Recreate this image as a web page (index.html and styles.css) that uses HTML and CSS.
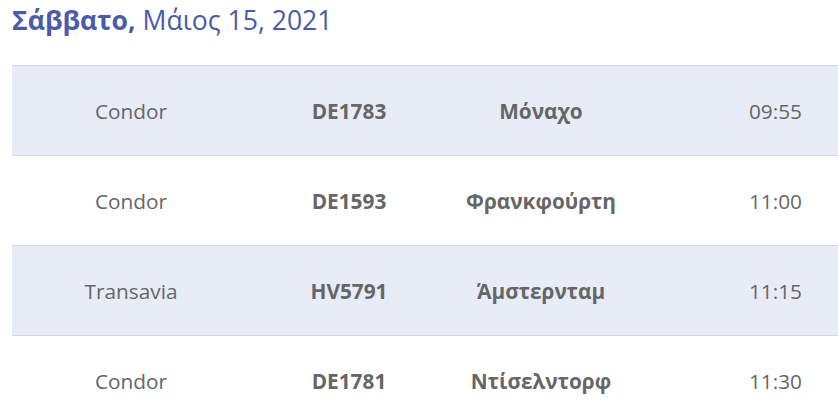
FILE: index.html
```html
<!DOCTYPE html>
<html lang="el">
<head>
<meta charset="utf-8">
<link rel="stylesheet" href="styles.css">
</head>
<body>
<h2 class="date"><strong>Σάββατο,</strong> Μάιος 15, 2021</h2>
<div class="flights">
  <div class="row alt"><span class="airline">Condor</span><span class="code">DE1783</span><span class="dest">Μόναχο</span><span class="time">09:55</span></div>
  <div class="row"><span class="airline">Condor</span><span class="code">DE1593</span><span class="dest">Φρανκφούρτη</span><span class="time">11:00</span></div>
  <div class="row alt"><span class="airline">Transavia</span><span class="code">HV5791</span><span class="dest">Άμστερνταμ</span><span class="time">11:15</span></div>
  <div class="row"><span class="airline">Condor</span><span class="code">DE1781</span><span class="dest">Ντίσελντορφ</span><span class="time">11:30</span></div>
</div>
</body>
</html>
```
FILE: styles.css
```css
html, body { margin: 0; padding: 0; background: #fff; }
body { padding: 0 0 0 12px; font-family: "Open Sans", sans-serif; overflow: hidden; }
.date { margin: 0; padding-top: 3px; height: 65px; box-sizing: border-box; font-size: 26.6px; font-weight: 400; color: #4b5ba8; line-height: 34px; }
.date strong { font-weight: 700; }
.flights { border-top: 1px solid #d3d7e2; }
.row { display: grid; grid-template-columns: 238px 198px 186px 204px; height: 89px; align-items: center; border-bottom: 1px solid #d3d7e2; font-size: 20.8px; color: #666; }
.row.alt { background: #e8ecf6; }
.row span { text-align: center; }
.code, .dest { font-weight: 700; }
.time { text-align: right !important; padding-right: 36px; }
```
